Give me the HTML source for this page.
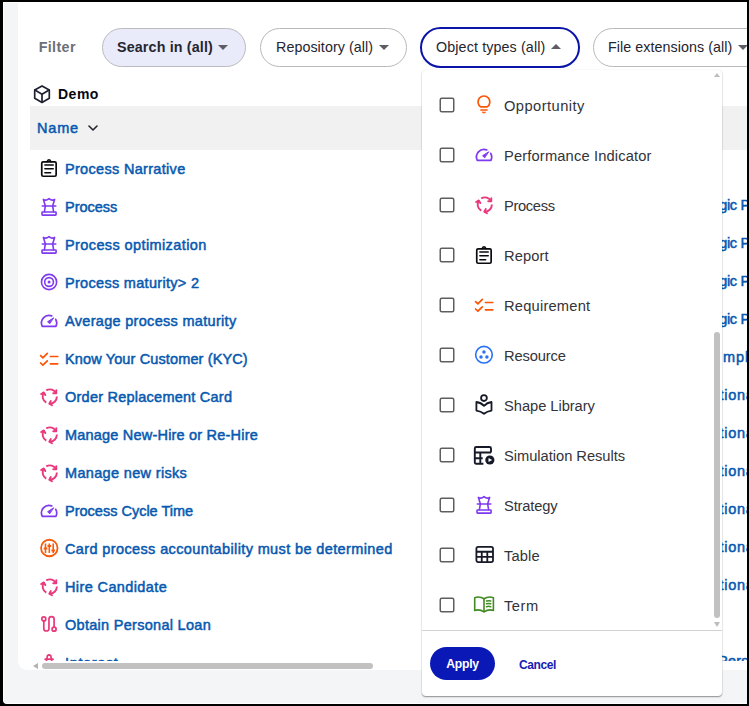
<!DOCTYPE html>
<html>
<head>
<meta charset="utf-8">
<title>Filter</title>
<style>
*{box-sizing:border-box;margin:0;padding:0}
html,body{width:749px;height:706px;overflow:hidden;background:#000}
body{font-family:"Liberation Sans",sans-serif;position:relative}
#frame{position:absolute;left:3px;top:2px;width:744px;height:702px;background:#f4f5f7;border:1px solid #fff;border-right:0;border-radius:0 0 0 4px;overflow:hidden}
.abs{position:absolute}
.t{position:absolute;white-space:nowrap;line-height:20px;height:20px}
.pill{position:absolute;top:28px;height:39px;border-radius:20px;border:1px solid #b9b9bd;background:#fff}
.pill .t{top:7.7px;font-size:14.3px;color:#25252f}
.tri{position:absolute;width:0;height:0;border-left:5px solid transparent;border-right:5px solid transparent}
.tri.dn{border-top:5px solid #5d5d63}
.tri.up{border-bottom:5px solid #5d5d63}
#hdr{position:absolute;left:30px;top:106px;width:720px;height:44px;background:#f1f1f1}
.row{position:absolute;left:0;height:38px;width:749px}
.row .t{left:65px;top:9px;font-size:14.5px;color:#0759b0;-webkit-text-stroke:0.5px #0759b0}
.row svg{position:absolute;left:39px;top:8.5px}
#rows{position:absolute;left:0;top:150px;width:747px;height:511px;overflow:hidden}
#dd{position:absolute;left:422px;top:70px;width:300px;height:626px;background:#fff;border-radius:4px;box-shadow:0 1px 1.5px rgba(0,0,0,.42),0 0 2px rgba(0,0,0,.07)}
#list{position:absolute;left:0;top:0;width:300px;height:561px;overflow:hidden;border-bottom:1px solid #d2d2d2}
.it{position:absolute;left:0;width:290px;height:50px}
.cb{position:absolute;left:17.6px;top:17.4px;width:15px;height:15px;border:1.7px solid #606060;border-radius:2.5px;background:#fff}
.it .t{left:82px;top:15.5px;font-size:14.7px;color:#333338}
.it svg{position:absolute;left:52px;top:15px}
.it svg.cbx{left:15px;top:15px}
#apply{position:absolute;left:8px;top:577px;padding-top:1.8px;width:65px;height:33px;border-radius:17px;background:#0a18b6;color:#fff;font-weight:bold;font-size:12.2px;line-height:31.2px;text-align:center;white-space:nowrap}
#cancel{position:absolute;left:97px;top:578.8px;height:33px;line-height:33px;color:#1620b4;font-size:12px;font-weight:bold;white-space:nowrap}
</style>
</head>
<body>
<div id="frame"></div>
<div class="abs" style="left:18px;top:2px;width:729px;height:668px;background:#fff;border-radius:0 0 0 9px"></div>

<!-- filter bar -->
<div class="t" id="filter" style="left:38.7px;top:37px;font-weight:bold;font-size:14.3px;color:#6d7078;letter-spacing:0.360px;">Filter</div>

<div class="pill" style="left:102px;width:144px;background:#e9ebfa;border-color:#bbbbbf">
  <div class="t" id="p1" style="left:14px;font-weight:bold;letter-spacing:0.144px;">Search in (all)</div>
  <div class="tri dn" style="left:115px;top:16px"></div>
</div>
<div class="pill" style="left:260px;width:147px">
  <div class="t" id="p2" style="left:15px;letter-spacing:0.059px;">Repository (all)</div>
  <div class="tri dn" style="left:118px;top:16px"></div>
</div>
<div class="pill" style="left:420px;top:27px;width:160px;height:41px;border:2px solid #0a14a8;border-radius:21px">
  <div class="t" id="p3" style="left:14px;letter-spacing:0.119px;">Object types (all)</div>
  <div class="tri up" style="left:129px;top:15px"></div>
</div>
<div class="pill" style="left:593px;width:200px">
  <div class="t" id="p4" style="left:14px;letter-spacing:0.050px;">File extensions (all)</div>
  <div class="tri dn" style="left:144px;top:16px"></div>
</div>

<!-- group title -->
<svg class="abs" style="left:32px;top:84px" width="20" height="20" viewBox="0 0 20 20" fill="none" stroke="#1e2130" stroke-width="1.7" stroke-linejoin="round" stroke-linecap="round">
  <path d="M10 1.9 L17.3 6 V14.2 L10 18.4 L2.7 14.2 V6 Z"/><path d="M2.9 6.1 L10 10.2 L17.1 6.1 M10 10.2 V18.2"/>
</svg>
<div class="t" id="demo" style="left:58px;top:84px;font-weight:bold;font-size:14px;color:#06060f;letter-spacing:0.499px;">Demo</div>

<!-- table header -->
<div id="hdr"></div>
<div class="t" id="name" style="left:37px;top:118px;font-size:14.5px;color:#0759b0;-webkit-text-stroke:0.5px #0759b0;letter-spacing:0.833px;">Name</div>
<svg class="abs" style="left:87px;top:123px" width="12" height="10" viewBox="0 0 12 10" fill="none" stroke="#23232d" stroke-width="1.6" stroke-linecap="round" stroke-linejoin="round"><path d="M2 3 L6 7 L10 3"/></svg>

<div id="rows">
<div class="row" style="top:0px"><svg width="20" height="20" viewBox="0 0 20 20" style="overflow:visible;top:8.1px"><g fill="none" stroke="#0b0b0f" stroke-width="1.7" stroke-linejoin="round" stroke-linecap="round"><rect x="2.75" y="3.85" width="14.4" height="14.4" rx="1.4"/><path d="M7.9 3.8 Q10 -0.2 12.1 3.8" stroke-width="1.5"/><path d="M5.9 7 H14.2 M5.9 10.8 H14.2 M5.9 14.7 H11.6" stroke-width="1.6"/></g></svg><div class="t" id="r0" style="letter-spacing:0.311px;">Process Narrative</div></div>
<div class="row" style="top:38px"><svg width="20" height="20" viewBox="0 0 20 20" style="overflow:visible;top:8.5px"><g fill="none" stroke="#7f39ef" stroke-width="1.6" stroke-linejoin="round" stroke-linecap="round"><path d="M6.3 8.8 L4.4 2.4 Q7 4.2 10 1.7 Q13 4.2 15.6 2.4 L13.7 8.8"/><path d="M3.3 9 H16.8"/><path d="M6.3 9.2 L5.4 14.6 M13.7 9.2 L14.6 14.6"/><rect x="3" y="15" width="14.1" height="3.1" rx="0.6"/></g></svg><div class="t" id="r1" style="letter-spacing:-0.001px;">Process</div><div class="t" style="left:719.15px;top:7px;letter-spacing:-0.3px">gic Process</div></div>
<div class="row" style="top:76px"><svg width="20" height="20" viewBox="0 0 20 20" style="overflow:visible;top:8.5px"><g fill="none" stroke="#7f39ef" stroke-width="1.6" stroke-linejoin="round" stroke-linecap="round"><path d="M6.3 8.8 L4.4 2.4 Q7 4.2 10 1.7 Q13 4.2 15.6 2.4 L13.7 8.8"/><path d="M3.3 9 H16.8"/><path d="M6.3 9.2 L5.4 14.6 M13.7 9.2 L14.6 14.6"/><rect x="3" y="15" width="14.1" height="3.1" rx="0.6"/></g></svg><div class="t" id="r2" style="letter-spacing:0.395px;">Process optimization</div><div class="t" style="left:719.15px;top:7px;letter-spacing:-0.3px">gic Process</div></div>
<div class="row" style="top:114px"><svg width="20" height="20" viewBox="0 0 20 20" style="overflow:visible;top:8.0px"><g fill="none" stroke="#7f39ef" stroke-width="1.6"><circle cx="10.05" cy="10" r="7.6"/><circle cx="10.05" cy="10" r="4.4"/><circle cx="10.05" cy="10" r="1.5" fill="#7f39ef" stroke="none"/></g></svg><div class="t" id="r3" style="letter-spacing:0.306px;">Process maturity&gt; 2</div><div class="t" style="left:719.15px;top:7px;letter-spacing:-0.3px">gic Process</div></div>
<div class="row" style="top:152px"><svg width="20" height="20" viewBox="0 0 20 20" style="overflow:visible;top:9.3px"><g fill="none" stroke="#7f39ef" stroke-width="1.7" stroke-linejoin="round" stroke-linecap="round"><path d="M12.7 4.86 A7.6 7.6 0 0 0 3.25 15.3 H16.95 A7.6 7.6 0 0 0 16.75 8.3"/><path d="M14.4 7 L8.6 10.7 L10.4 12.6 Z" fill="#7f39ef" stroke-width="1"/></g></svg><div class="t" id="r4" style="letter-spacing:0.304px;">Average process maturity</div><div class="t" style="left:719.15px;top:7px;letter-spacing:-0.3px">gic Process</div></div>
<div class="row" style="top:190px"><svg width="20" height="20" viewBox="0 0 20 20" style="overflow:visible;top:8.5px"><g fill="none" stroke="#fb5404" stroke-width="1.7" stroke-linejoin="round" stroke-linecap="round"><path d="M1.6 6.6 L3.9 8.8 L8.3 4.4 M1.6 14 L3.9 16.2 L8.3 11.8 M11.4 7.5 H18.7 M11.4 14.8 H18.7"/></g></svg><div class="t" id="r5" style="letter-spacing:0.130px;">Know Your Customer (KYC)</div><div class="t" style="left:722.95px;top:7px;letter-spacing:1.0px">mpliance</div></div>
<div class="row" style="top:228px"><svg width="20" height="20" viewBox="0 0 20 20" style="overflow:visible;top:8.5px"><g fill="none" stroke="#e9397c" stroke-width="2.05" stroke-linejoin="miter" stroke-linecap="butt" transform="translate(1.49,0.19) scale(0.93)"><g><path d="M6.2 3.42 A7.6 7.6 0 0 1 16.9 6.5"/><path d="M17 3.3 V6.6 H13.7" stroke-linecap="round" stroke-linejoin="round"/></g><g transform="rotate(120 10 10)"><path d="M6.2 3.42 A7.6 7.6 0 0 1 16.9 6.5"/><path d="M17 3.3 V6.6 H13.7" stroke-linecap="round" stroke-linejoin="round"/></g><g transform="rotate(240 10 10)"><path d="M6.2 3.42 A7.6 7.6 0 0 1 16.9 6.5"/><path d="M17 3.3 V6.6 H13.7" stroke-linecap="round" stroke-linejoin="round"/></g></g></svg><div class="t" id="r6" style="letter-spacing:0.238px;">Order Replacement Card</div><div class="t" style="left:719.4px;top:7px;letter-spacing:0.75px">tional Process</div></div>
<div class="row" style="top:266px"><svg width="20" height="20" viewBox="0 0 20 20" style="overflow:visible;top:8.5px"><g fill="none" stroke="#e9397c" stroke-width="2.05" stroke-linejoin="miter" stroke-linecap="butt" transform="translate(1.49,0.19) scale(0.93)"><g><path d="M6.2 3.42 A7.6 7.6 0 0 1 16.9 6.5"/><path d="M17 3.3 V6.6 H13.7" stroke-linecap="round" stroke-linejoin="round"/></g><g transform="rotate(120 10 10)"><path d="M6.2 3.42 A7.6 7.6 0 0 1 16.9 6.5"/><path d="M17 3.3 V6.6 H13.7" stroke-linecap="round" stroke-linejoin="round"/></g><g transform="rotate(240 10 10)"><path d="M6.2 3.42 A7.6 7.6 0 0 1 16.9 6.5"/><path d="M17 3.3 V6.6 H13.7" stroke-linecap="round" stroke-linejoin="round"/></g></g></svg><div class="t" id="r7" style="letter-spacing:0.200px;">Manage New-Hire or Re-Hire</div><div class="t" style="left:719.4px;top:7px;letter-spacing:0.75px">tional Process</div></div>
<div class="row" style="top:304px"><svg width="20" height="20" viewBox="0 0 20 20" style="overflow:visible;top:8.5px"><g fill="none" stroke="#e9397c" stroke-width="2.05" stroke-linejoin="miter" stroke-linecap="butt" transform="translate(1.49,0.19) scale(0.93)"><g><path d="M6.2 3.42 A7.6 7.6 0 0 1 16.9 6.5"/><path d="M17 3.3 V6.6 H13.7" stroke-linecap="round" stroke-linejoin="round"/></g><g transform="rotate(120 10 10)"><path d="M6.2 3.42 A7.6 7.6 0 0 1 16.9 6.5"/><path d="M17 3.3 V6.6 H13.7" stroke-linecap="round" stroke-linejoin="round"/></g><g transform="rotate(240 10 10)"><path d="M6.2 3.42 A7.6 7.6 0 0 1 16.9 6.5"/><path d="M17 3.3 V6.6 H13.7" stroke-linecap="round" stroke-linejoin="round"/></g></g></svg><div class="t" id="r8" style="letter-spacing:0.334px;">Manage new risks</div><div class="t" style="left:719.4px;top:7px;letter-spacing:0.75px">tional Process</div></div>
<div class="row" style="top:342px"><svg width="20" height="20" viewBox="0 0 20 20" style="overflow:visible;top:9.3px"><g fill="none" stroke="#7f39ef" stroke-width="1.7" stroke-linejoin="round" stroke-linecap="round"><path d="M12.7 4.86 A7.6 7.6 0 0 0 3.25 15.3 H16.95 A7.6 7.6 0 0 0 16.75 8.3"/><path d="M14.4 7 L8.6 10.7 L10.4 12.6 Z" fill="#7f39ef" stroke-width="1"/></g></svg><div class="t" id="r9" style="letter-spacing:0.000px;">Process Cycle Time</div><div class="t" style="left:719.4px;top:7px;letter-spacing:0.75px">tional Process</div></div>
<div class="row" style="top:380px"><svg width="20" height="20" viewBox="0 0 20 20" style="overflow:visible;top:8.2px"><g fill="none" stroke="#f95a0b" stroke-linecap="butt"><circle cx="10.3" cy="10" r="8.25" stroke-width="1.8"/><path d="M6.5 5.5 V15 M10.3 5.5 V15 M14.2 5.5 V15" stroke-width="1.6"/><path d="M4.7 10.4 H8.3 M8.5 8 H12.1 M12.4 12.6 H16" stroke-width="2"/></g></svg><div class="t" id="r10" style="letter-spacing:0.376px;">Card process accountability must be determined</div><div class="t" style="left:719.4px;top:7px;letter-spacing:0.75px">tional Process</div></div>
<div class="row" style="top:418px"><svg width="20" height="20" viewBox="0 0 20 20" style="overflow:visible;top:8.5px"><g fill="none" stroke="#e9397c" stroke-width="2.05" stroke-linejoin="miter" stroke-linecap="butt" transform="translate(1.49,0.19) scale(0.93)"><g><path d="M6.2 3.42 A7.6 7.6 0 0 1 16.9 6.5"/><path d="M17 3.3 V6.6 H13.7" stroke-linecap="round" stroke-linejoin="round"/></g><g transform="rotate(120 10 10)"><path d="M6.2 3.42 A7.6 7.6 0 0 1 16.9 6.5"/><path d="M17 3.3 V6.6 H13.7" stroke-linecap="round" stroke-linejoin="round"/></g><g transform="rotate(240 10 10)"><path d="M6.2 3.42 A7.6 7.6 0 0 1 16.9 6.5"/><path d="M17 3.3 V6.6 H13.7" stroke-linecap="round" stroke-linejoin="round"/></g></g></svg><div class="t" id="r11" style="letter-spacing:0.383px;">Hire Candidate</div><div class="t" style="left:719.4px;top:7px;letter-spacing:0.75px">tional Process</div></div>
<div class="row" style="top:456px"><svg width="20" height="20" viewBox="0 0 20 20" style="overflow:visible;top:8.0px"><g fill="none" stroke="#e9397c" stroke-width="1.7" stroke-linecap="round"><circle cx="4.8" cy="4.9" r="2"/><circle cx="15.1" cy="15.2" r="2"/><path d="M4.8 6.9 V14.4 A2.58 2.58 0 0 0 9.96 14.4 V5.1 A2.57 2.57 0 0 1 15.1 5.1 V13.2"/></g></svg><div class="t" id="r12" style="letter-spacing:0.288px;">Obtain Personal Loan</div></div>
<div class="row" style="top:494px"><svg width="20" height="20" viewBox="0 0 20 20" style="overflow:visible;top:8.5px"><g fill="none" stroke="#e9397c" stroke-width="1.7" stroke-linejoin="round" stroke-linecap="round"><g transform="translate(0,-0.9)"><path d="M7.9 6.8 L8.4 3.6 Q10.1 2.2 11.8 3.6 L12.3 6.8"/><path d="M6.2 7.1 H14 " stroke-width="1.8"/><path d="M7.9 7 L6 14 M12.3 7 L14.2 14"/></g></g></svg><div class="t" id="r13" style="letter-spacing:0.644px;">Interest</div><div class="t" style="left:718.0px;top:7px;letter-spacing:0.25px">Personnel</div></div>
</div>

<!-- horizontal scrollbar -->
<div class="abs" style="left:32.8px;top:663px;width:0;height:0;border-top:3px solid transparent;border-bottom:3px solid transparent;border-right:5px solid #b3b3b3"></div>
<div class="abs" style="left:42px;top:663px;width:331px;height:6px;border-radius:3px;background:#c1c1c1"></div>

<div id="dd">
<div id="list">
<div class="it" style="top:10px"><svg class="cbx" width="20" height="20" viewBox="0 0 20 20"><rect x="3.25" y="3.25" width="13.5" height="13.4" rx="1.5" fill="#fff" stroke="#5e5e5e" stroke-width="1.5"/></svg><svg width="20" height="20" viewBox="0 0 20 20" style="overflow:visible;top:15px"><g fill="none" stroke="#fb5404" stroke-width="1.7" stroke-linejoin="round" stroke-linecap="round"><path d="M6.8 11.9 A5.9 5.9 0 1 1 13.1 11.9 Z"/><path d="M7 15 H12.9"/><path d="M8.3 17.2 H11.7 Q10 19.3 8.3 17.2 Z" fill="#fb5404" stroke-width="0.6"/></g></svg><div class="t" id="i0" style="letter-spacing:0.450px;">Opportunity</div></div>
<div class="it" style="top:60px"><svg class="cbx" width="20" height="20" viewBox="0 0 20 20"><rect x="3.25" y="3.25" width="13.5" height="13.4" rx="1.5" fill="#fff" stroke="#5e5e5e" stroke-width="1.5"/></svg><svg width="20" height="20" viewBox="0 0 20 20" style="overflow:visible;top:15.3px"><g fill="none" stroke="#7f39ef" stroke-width="1.7" stroke-linejoin="round" stroke-linecap="round"><path d="M12.7 4.86 A7.6 7.6 0 0 0 3.25 15.3 H16.95 A7.6 7.6 0 0 0 16.75 8.3"/><path d="M14.4 7 L8.6 10.7 L10.4 12.6 Z" fill="#7f39ef" stroke-width="1"/></g></svg><div class="t" id="i1" style="letter-spacing:0.150px;">Performance Indicator</div></div>
<div class="it" style="top:110px"><svg class="cbx" width="20" height="20" viewBox="0 0 20 20"><rect x="3.25" y="3.25" width="13.5" height="13.4" rx="1.5" fill="#fff" stroke="#5e5e5e" stroke-width="1.5"/></svg><svg width="20" height="20" viewBox="0 0 20 20" style="overflow:visible;top:15px"><g fill="none" stroke="#e9397c" stroke-width="2.05" stroke-linejoin="miter" stroke-linecap="butt" transform="translate(1.49,0.19) scale(0.93)"><g><path d="M6.2 3.42 A7.6 7.6 0 0 1 16.9 6.5"/><path d="M17 3.3 V6.6 H13.7" stroke-linecap="round" stroke-linejoin="round"/></g><g transform="rotate(120 10 10)"><path d="M6.2 3.42 A7.6 7.6 0 0 1 16.9 6.5"/><path d="M17 3.3 V6.6 H13.7" stroke-linecap="round" stroke-linejoin="round"/></g><g transform="rotate(240 10 10)"><path d="M6.2 3.42 A7.6 7.6 0 0 1 16.9 6.5"/><path d="M17 3.3 V6.6 H13.7" stroke-linecap="round" stroke-linejoin="round"/></g></g></svg><div class="t" id="i2" style="letter-spacing:-0.334px;">Process</div></div>
<div class="it" style="top:160px"><svg class="cbx" width="20" height="20" viewBox="0 0 20 20"><rect x="3.25" y="3.25" width="13.5" height="13.4" rx="1.5" fill="#fff" stroke="#5e5e5e" stroke-width="1.5"/></svg><svg width="20" height="20" viewBox="0 0 20 20" style="overflow:visible;top:14.5px"><g fill="none" stroke="#0b0b0f" stroke-width="1.7" stroke-linejoin="round" stroke-linecap="round"><rect x="2.75" y="3.85" width="14.4" height="14.4" rx="1.4"/><path d="M7.9 3.8 Q10 -0.2 12.1 3.8" stroke-width="1.5"/><path d="M5.9 7 H14.2 M5.9 10.8 H14.2 M5.9 14.7 H11.6" stroke-width="1.6"/></g></svg><div class="t" id="i3" style="letter-spacing:0.100px;">Report</div></div>
<div class="it" style="top:210px"><svg class="cbx" width="20" height="20" viewBox="0 0 20 20"><rect x="3.25" y="3.25" width="13.5" height="13.4" rx="1.5" fill="#fff" stroke="#5e5e5e" stroke-width="1.5"/></svg><svg width="20" height="20" viewBox="0 0 20 20" style="overflow:visible;top:15px"><g fill="none" stroke="#fb5404" stroke-width="1.7" stroke-linejoin="round" stroke-linecap="round"><path d="M1.6 6.6 L3.9 8.8 L8.3 4.4 M1.6 14 L3.9 16.2 L8.3 11.8 M11.4 7.5 H18.7 M11.4 14.8 H18.7"/></g></svg><div class="t" id="i4" style="letter-spacing:0.200px;">Requirement</div></div>
<div class="it" style="top:260px"><svg class="cbx" width="20" height="20" viewBox="0 0 20 20"><rect x="3.25" y="3.25" width="13.5" height="13.4" rx="1.5" fill="#fff" stroke="#5e5e5e" stroke-width="1.5"/></svg><svg width="20" height="20" viewBox="0 0 20 20" style="overflow:visible;top:15px"><g fill="#2a72f5" stroke="none"><circle cx="9.96" cy="9.7" r="8.3" fill="none" stroke="#2a72f5" stroke-width="1.6"/><circle cx="9.96" cy="7.1" r="1.75"/><circle cx="7.0" cy="11.9" r="1.75"/><circle cx="12.9" cy="11.9" r="1.75"/></g></svg><div class="t" id="i5" style="letter-spacing:-0.141px;">Resource</div></div>
<div class="it" style="top:310px"><svg class="cbx" width="20" height="20" viewBox="0 0 20 20"><rect x="3.25" y="3.25" width="13.5" height="13.4" rx="1.5" fill="#fff" stroke="#5e5e5e" stroke-width="1.5"/></svg><svg width="20" height="20" viewBox="0 0 20 20" style="overflow:visible;top:15px"><g fill="none" stroke="#161927" stroke-width="1.8" stroke-linejoin="round" stroke-linecap="round"><circle cx="9.96" cy="3.1" r="2.9"/><path d="M2.4 7 Q7 7.6 10 10.9 Q13 7.6 17.5 7 V15.6 Q13 16.2 10 18.7 Q7 16.2 2.4 15.6 Z"/></g></svg><div class="t" id="i6" style="letter-spacing:-0.042px;">Shape Library</div></div>
<div class="it" style="top:360px"><svg class="cbx" width="20" height="20" viewBox="0 0 20 20"><rect x="3.25" y="3.25" width="13.5" height="13.4" rx="1.5" fill="#fff" stroke="#5e5e5e" stroke-width="1.5"/></svg><svg width="20" height="20" viewBox="0 0 20 20" style="overflow:visible;top:15px"><g fill="none" stroke="#161927" stroke-width="1.9" stroke-linejoin="round" stroke-linecap="butt"><path d="M9.4 18.7 H2.3 Q0.8 18.7 0.8 17.2 V3.5 Q0.8 2 2.3 2 H15.5 Q17 2 17 3.5 V7.6"/><path d="M0.8 7.5 H17 M6.3 7.5 V18.7 M0.8 13.2 H8.7"/><circle cx="15.85" cy="15" r="5.9" fill="#fff" stroke="none"/><circle cx="15.85" cy="15" r="4.6" fill="#161927" stroke="none"/><path d="M14.5 13.1 V16.9 L18.1 15 Z" fill="#fff" stroke="none"/></g></svg><div class="t" id="i7" style="letter-spacing:-0.031px;">Simulation Results</div></div>
<div class="it" style="top:410px"><svg class="cbx" width="20" height="20" viewBox="0 0 20 20"><rect x="3.25" y="3.25" width="13.5" height="13.4" rx="1.5" fill="#fff" stroke="#5e5e5e" stroke-width="1.5"/></svg><svg width="20" height="20" viewBox="0 0 20 20" style="overflow:visible;top:15px"><g fill="none" stroke="#7f39ef" stroke-width="1.6" stroke-linejoin="round" stroke-linecap="round"><path d="M6.3 8.8 L4.4 2.4 Q7 4.2 10 1.7 Q13 4.2 15.6 2.4 L13.7 8.8"/><path d="M3.3 9 H16.8"/><path d="M6.3 9.2 L5.4 14.6 M13.7 9.2 L14.6 14.6"/><rect x="3" y="15" width="14.1" height="3.1" rx="0.6"/></g></svg><div class="t" id="i8" style="letter-spacing:-0.141px;">Strategy</div></div>
<div class="it" style="top:460px"><svg class="cbx" width="20" height="20" viewBox="0 0 20 20"><rect x="3.25" y="3.25" width="13.5" height="13.4" rx="1.5" fill="#fff" stroke="#5e5e5e" stroke-width="1.5"/></svg><svg width="20" height="20" viewBox="0 0 20 20" style="overflow:visible;top:15px"><g fill="none" stroke="#161927" stroke-width="1.8"><rect x="2.4" y="1.8" width="16.6" height="15.25" rx="1.8"/><path d="M2.4 6.75 H19 M2.4 11.9 H19 M7.75 6.75 V17 M13.3 6.75 V17"/></g></svg><div class="t" id="i9" style="letter-spacing:0.125px;">Table</div></div>
<div class="it" style="top:510px"><svg class="cbx" width="20" height="20" viewBox="0 0 20 20"><rect x="3.25" y="3.25" width="13.5" height="13.4" rx="1.5" fill="#fff" stroke="#5e5e5e" stroke-width="1.5"/></svg><svg width="20" height="20" viewBox="0 0 20 20" style="overflow:visible;top:15px"><g fill="none" stroke="#428a22" stroke-width="1.6" stroke-linejoin="round" stroke-linecap="round"><path d="M0.7 2.7 Q5.5 1 10 3.7 Q14.5 1 19.4 2.7 V15.4 Q14.5 13.8 10 16.9 Q5.5 13.8 0.7 15.4 Z"/><path d="M10 3.8 V16.8"/><path d="M12.6 6 Q14.6 5.3 16.7 6 M12.6 8.8 Q14.6 8.1 16.7 8.8 M12.6 11.7 Q14.6 11 16.7 11.7" stroke-width="1.5"/></g></svg><div class="t" id="i10" style="letter-spacing:0.500px;">Term</div></div>
<!-- vertical scrollbar -->
<div class="abs" style="left:292px;top:2.5px;width:0;height:0;border-left:3px solid transparent;border-right:3px solid transparent;border-bottom:4.5px solid #bdbdbd"></div>
<div class="abs" style="left:292px;top:262px;width:6px;height:286px;border-radius:3px;background:#c1c1c1"></div>
<div class="abs" style="left:292px;top:552.4px;width:0;height:0;border-left:3px solid transparent;border-right:3px solid transparent;border-top:5px solid #bdbdbd"></div>
</div>
<div id="apply" style="letter-spacing:-0.250px;">Apply</div>
<div id="cancel" style="letter-spacing:-0.400px;">Cancel</div>
</div>
<div class="abs" style="left:747px;top:0;width:2px;height:706px;background:#000"></div>
<div class="abs" style="left:0;top:704px;width:749px;height:2px;background:#000"></div>
</body>
</html>
